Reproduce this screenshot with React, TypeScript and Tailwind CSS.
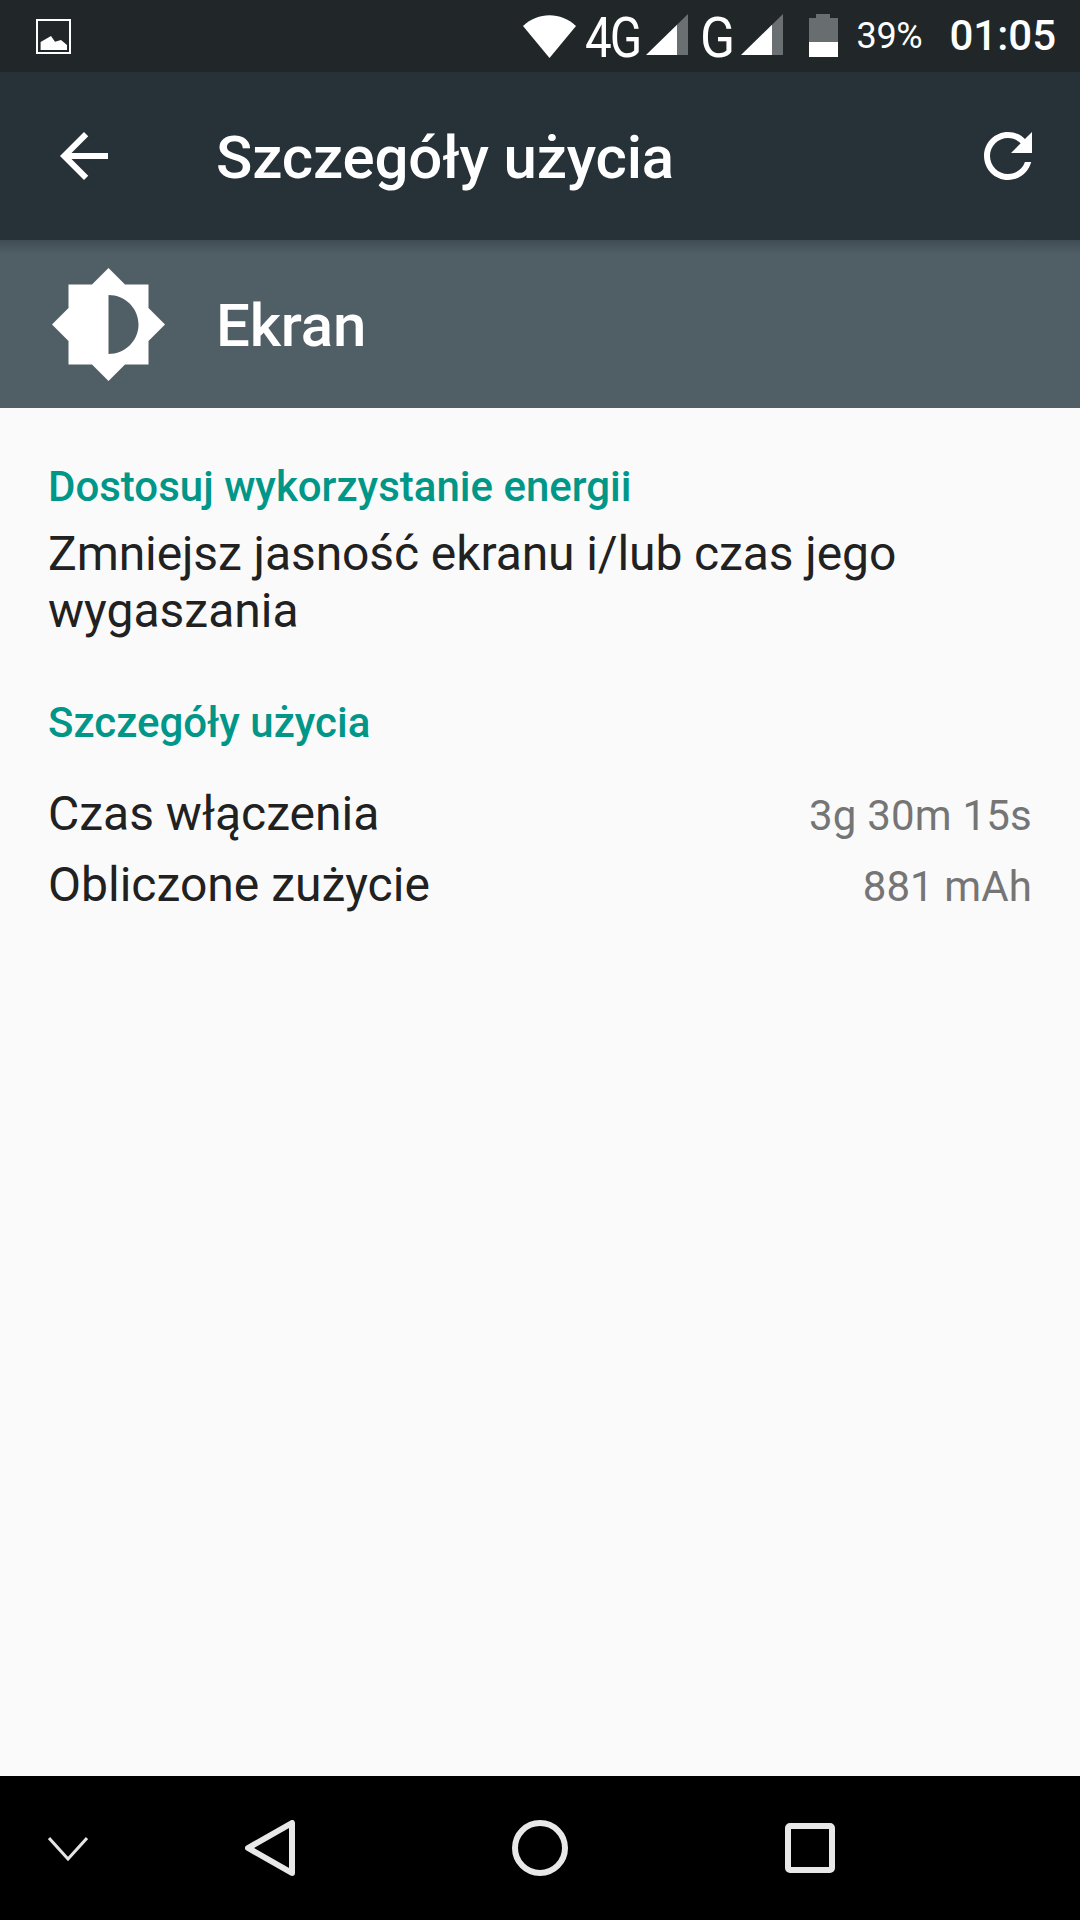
function Signal({ className }: { className: string }) {
  return (
    <svg width="42" height="41" viewBox="0 0 42 41" className={className}>
      <path d="M0 41L31 10.700V41Z" fill="#fff" />
      <path d="M31 10.700L42 0V41H31Z" fill="#6a6f72" />
    </svg>
  );
}

export default function App() {
  return (
    <div className="w-[1080px] h-[1920px] flex flex-col bg-[#fafafa] overflow-hidden font-['Roboto',sans-serif]">
      <div className="h-[72px] bg-[#212729] flex items-center text-white">
        <svg className="ml-[36px]" width="35" height="35" viewBox="0 0 35 35">
          <rect x="1" y="1" width="33" height="33" fill="none" stroke="#fff" strokeWidth="2" />
          <path d="M4.600 23L15 17L19 22.700L25 21L31 26V31H4.600Z" fill="#fff" />
        </svg>
        <div className="ml-auto flex items-center h-full">
          <svg width="53" height="43" viewBox="0 0 53 43">
            <path d="M0 11C15 -3.500 38 -3.500 53 11L26.500 43Z" fill="#fff" />
          </svg>
          <div className="ml-[9px] w-[56px] text-[56px] leading-none font-normal tracking-[-2.500px] origin-left scale-x-[0.85] mt-[3px]">4G</div>
          <Signal className="ml-[5px] mt-[-3px]" />
          <div className="ml-[12px] w-[41px] text-[56px] leading-none font-normal mt-[3px] origin-left scale-x-[0.92]">G</div>
          <Signal className="ml-[0px] mt-[-3px]" />
          <svg width="29" height="43" viewBox="0 0 29 43" className="ml-[26px] mt-[-0.5px]">
            <path d="M0 4H7V0H21V4H29V28H0Z" fill="#686d70" />
            <path d="M0 28H29V43H0Z" fill="#fff" />
          </svg>
          <span className="ml-[19px] text-[36px] leading-none font-normal tracking-[-0.3px]">39%</span>
          <span className="ml-[27px] mr-[24px] text-[42px] leading-none font-medium">01:05</span>
        </div>
      </div>

      <div className="h-[168px] bg-[#263238] flex items-center text-white">
        <svg className="ml-[48px]" width="72" height="72" viewBox="0 0 24 24" fill="#fff">
          <path d="M20 11H7.830l5.590-5.590L12 4l-8 8 8 8 1.410-1.410L7.830 13H20v-2z" />
        </svg>
        <span className="ml-[96px] text-[60px] leading-none font-medium tracking-[-0.15px] mt-[3px]">Szczegóły użycia</span>
        <svg className="ml-auto mr-[36px]" width="72" height="72" viewBox="0 0 24 24" fill="#fff">
          <path d="M17.650 6.350C16.200 4.900 14.210 4 12 4c-4.420 0-7.990 3.580-7.990 8s3.570 8 7.990 8c3.730 0 6.840-2.550 7.730-6h-2.080c-.82 2.330-3.040 4-5.650 4-3.310 0-6-2.690-6-6s2.690-6 6-6c1.660 0 3.140.69 4.220 1.780L13 11h7V4l-2.350 2.350z" />
        </svg>
      </div>

      <div className="h-[168px] bg-[#505e66] flex items-center text-white relative">
        <div className="absolute inset-x-0 top-0 h-[14px] bg-gradient-to-b from-[#414d54] to-transparent" />
        <svg className="ml-[52px]" width="113" height="113" viewBox="0 0 113 113">
          <path
            fillRule="evenodd"
            fill="#fff"
            d="M56.500 0L73 16.500H96.500V40L113 56.500L96.500 73V96.500H73L56.500 113L40 96.500H16.500V73L0 56.500L16.500 40V16.500H40ZM56.500 27V86C73 86 86.500 73 86.500 56.500C86.500 40 73 27 56.500 27Z"
          />
        </svg>
        <span className="ml-[51px] text-[60px] leading-none font-medium tracking-[-0.2px] mt-[3px]">Ekran</span>
      </div>

      <div className="flex-1 px-[48px] pt-[51px]">
        <div className="text-[#009688] text-[42px] leading-[56px] font-medium">Dostosuj wykorzystanie energii</div>
        <div className="text-[#212121] text-[48px] leading-[57px] mt-[10px]">
          <span className="tracking-[-0.1px]">Zmniejsz jasność ekranu i/lub czas jego</span>
          <br />
          wygaszania
        </div>
        <div className="text-[#009688] text-[42px] leading-[56px] font-medium mt-[56px]">Szczegóły użycia</div>
        <div className="flex items-center justify-between mt-[34px] h-[58px]">
          <span className="text-[#212121] text-[48px]">Czas włączenia</span>
          <span className="text-[#757575] text-[42px] tracking-[0.2px] mt-[2px]">3g 30m 15s</span>
        </div>
        <div className="flex items-center justify-between mt-[13px] h-[58px]">
          <span className="text-[#212121] text-[48px]">Obliczone zużycie</span>
          <span className="text-[#757575] text-[42px] tracking-[0.1px] mt-[2px]">881 mAh</span>
        </div>
      </div>

      <div className="h-[144px] bg-black relative">
        <svg className="absolute left-[48px] top-[61px]" width="40" height="24" viewBox="0 0 40 24" fill="none" stroke="#e5e5e5" strokeWidth="3">
          <path d="M1 1L20 22L39 1" />
        </svg>
        <svg className="absolute left-[245px] top-[44px]" width="50" height="56" viewBox="0 0 50 56" fill="none" stroke="#e8e8e8" strokeWidth="6" strokeLinejoin="round">
          <path d="M47 3V53L3 28Z" />
        </svg>
        <svg className="absolute left-[512px] top-[44px]" width="56" height="56" viewBox="0 0 56 56" fill="none" stroke="#e8e8e8" strokeWidth="6">
          <circle cx="28" cy="28" r="25" />
        </svg>
        <svg className="absolute left-[785px] top-[47px]" width="50" height="50" viewBox="0 0 50 50" fill="none" stroke="#e8e8e8" strokeWidth="6">
          <rect x="3" y="3" width="44" height="44" rx="2" />
        </svg>
      </div>
    </div>
  );
}
